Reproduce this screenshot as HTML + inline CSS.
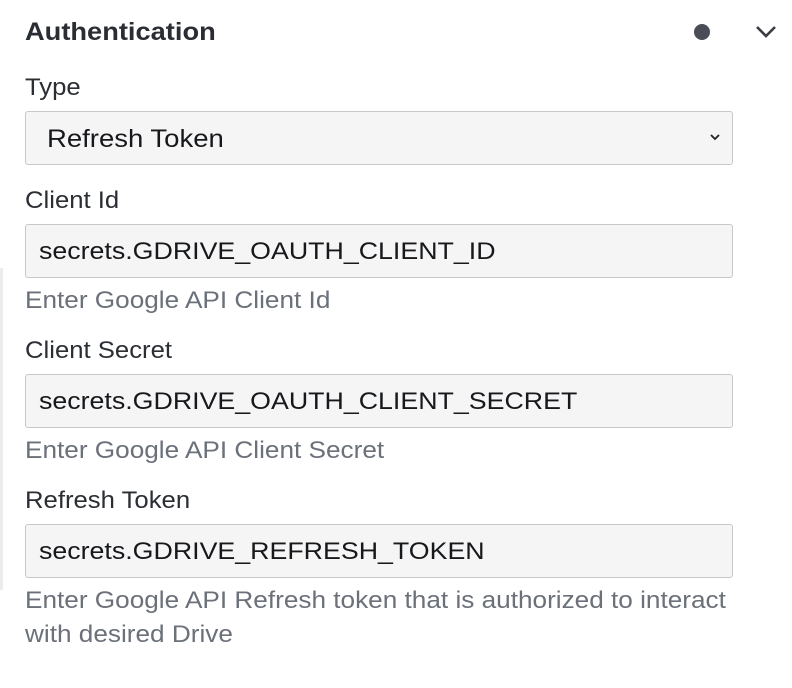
<!DOCTYPE html>
<html><head><style>
body{margin:0;width:792px;height:688px;background:#fff;font-family:"Liberation Sans",sans-serif;position:relative;overflow:hidden;color:#1f2328}
.a{position:absolute;white-space:nowrap;line-height:1;transform-origin:0 50%}
.h{left:25px;top:20px;font-size:25px;font-weight:bold;color:#2a2d33;transform:scaleX(1.09)}
.l{left:25px;font-size:24px;color:#2b2e33;transform:scaleX(1.07)}
.box{position:absolute;left:25px;width:706px;background:#f5f5f5;border:1.5px solid #c6c8cc;border-radius:3px;height:52px}
.v{left:39px;font-size:24px;color:#16181b;transform:scaleX(1.115)}
.hp{left:25px;font-size:24px;color:#6b7079;transform:scaleX(1.09)}
</style></head><body>
<div style="position:absolute;left:0;top:268px;width:3px;height:322px;background:#ececee"></div>
<div class="a h">Authentication</div>
<div style="position:absolute;left:694px;top:24px;width:16px;height:16px;border-radius:50%;background:#4a4d55"></div>
<svg style="position:absolute;left:754px;top:24px" width="24" height="16" viewBox="0 0 24 16"><path d="M3 3 L12 12 L21 3" fill="none" stroke="#3a3d44" stroke-width="2.6"/></svg>
<div class="a l" style="top:76px">Type</div>
<div class="box" style="top:111px"></div>
<div class="a v" style="top:127px;left:47px;font-size:25px;transform:scaleX(1.1)">Refresh Token</div>
<svg style="position:absolute;left:709px;top:133px" width="12" height="9" viewBox="0 0 12 9"><path d="M2 2 L6 6 L10 2" fill="none" stroke="#222" stroke-width="1.8"/></svg>
<div class="a l" style="top:189px">Client Id</div>
<div class="box" style="top:224px"></div>
<div class="a v" style="top:240px">secrets.GDRIVE_OAUTH_CLIENT_ID</div>
<div class="a hp" style="top:289px">Enter Google API Client Id</div>
<div class="a l" style="top:339px">Client Secret</div>
<div class="box" style="top:374px"></div>
<div class="a v" style="top:390px">secrets.GDRIVE_OAUTH_CLIENT_SECRET</div>
<div class="a hp" style="top:439px">Enter Google API Client Secret</div>
<div class="a l" style="top:489px">Refresh Token</div>
<div class="box" style="top:524px"></div>
<div class="a v" style="top:540px">secrets.GDRIVE_REFRESH_TOKEN</div>
<div class="a hp" style="top:589px">Enter Google API Refresh token that is authorized to interact</div>
<div class="a hp" style="top:623px">with desired Drive</div>
</body></html>
